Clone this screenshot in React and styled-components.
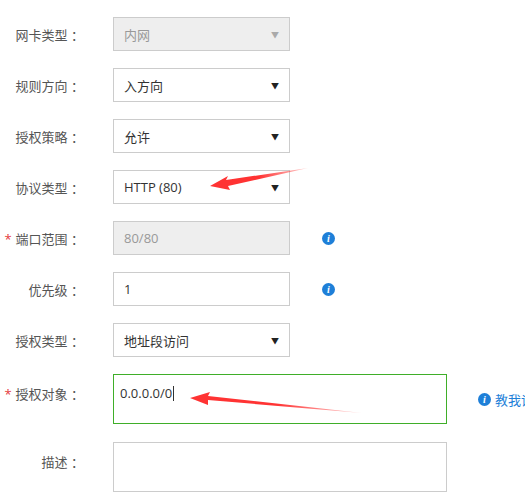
import React from 'react';
import styled, { createGlobalStyle } from 'styled-components';

const Global = createGlobalStyle`
  body { margin: 0; background: #fff; font-family: "Open Sans", "Noto Sans CJK SC", sans-serif; font-size: 13px; color: #333; }
`;

const Page = styled.div`
  position: relative;
  width: 525px;
  height: 500px;
  overflow: hidden;
  padding-top: 17px;
  box-sizing: border-box;
`;

const Row = styled.div`
  display: flex;
  align-items: center;
  height: ${p => (p.tall ? 50 : 34)}px;
  margin-bottom: ${p => (p.tall ? 18 : 17)}px;
`;

const Label = styled.div`
  flex-shrink: 0;
  width: 84px;
  margin-right: 29px;
  text-align: right;
  color: #555;
  white-space: nowrap;
  ${p => p.top && 'align-self: flex-start; padding-top: 10px;'}
`;

const Star = styled.span`
  color: #e4393c;
  margin-right: 4px;
`;

const Field = styled.div`
  flex-shrink: 0;
  box-sizing: border-box;
  width: ${p => p.w || 177}px;
  height: 100%;
  border: 1px solid ${p => (p.active ? '#3fae29' : '#ccc')};
  background: ${p => (p.disabled ? '#eee' : '#fff')};
  color: ${p => (p.disabled ? '#999' : '#333')};
  display: flex;
  align-items: ${p => (p.multi ? 'flex-start' : 'center')};
  padding: ${p => (p.multi ? '9px 6px' : '0 10px 0 10px')};
  justify-content: space-between;
`;

const Caret = styled.span`
  font-size: 8px;
  color: ${p => (p.disabled ? '#aaa' : '#222')};
`;

const Info = styled.span`
  flex-shrink: 0;
  display: inline-flex;
  align-items: center;
  justify-content: center;
  width: 13px;
  height: 13px;
  border-radius: 50%;
  background: #1e7fd8;
  color: #fff;
  font: italic bold 10px "Liberation Serif", serif;
  margin-left: ${p => p.gap ?? 32}px;
`;

const Help = styled.span`
  display: inline-flex;
  align-items: center;
  gap: 4px;
  margin-left: 31px;
  color: #1e7fd8;
  white-space: nowrap;
`;

const Cursor = styled.span`
  border-left: 1px solid #333;
  height: 15px;
  margin-left: 1px;
`;

const Value = styled.span`
  display: flex;
  align-items: center;
`;

const Arrows = styled.svg`
  position: absolute;
  left: 0;
  top: 0;
  pointer-events: none;
`;

const Select = ({ value, disabled }) => (
  <Field disabled={disabled}>
    <span>{value}</span>
    <Caret disabled={disabled}>▼</Caret>
  </Field>
);

export default function App() {
  return (
    <Page>
      <Global />
      <Row><Label>网卡类型 ：</Label><Select value="内网" disabled /></Row>
      <Row><Label>规则方向 ：</Label><Select value="入方向" /></Row>
      <Row><Label>授权策略 ：</Label><Select value="允许" /></Row>
      <Row><Label>协议类型 ：</Label><Select value="HTTP (80)" /></Row>
      <Row>
        <Label><Star>*</Star>端口范围 ：</Label>
        <Field disabled>80/80</Field>
        <Info>i</Info>
      </Row>
      <Row>
        <Label>优先级 ：</Label>
        <Field>1</Field>
        <Info>i</Info>
      </Row>
      <Row><Label>授权类型 ：</Label><Select value="地址段访问" /></Row>
      <Row tall>
        <Label top><Star>*</Star>授权对象 ：</Label>
        <Field w={334} active multi>
          <Value>0.0.0.0/0<Cursor /></Value>
        </Field>
        <Help><Info gap={0}>i</Info>教我设置</Help>
      </Row>
      <Row tall>
        <Label top>描述 ：</Label>
        <Field w={334} multi />
      </Row>
      <Arrows width="525" height="500">
        <defs>
          <linearGradient id="g1" x1="1" y1="0" x2="0" y2="0">
            <stop offset="0" stopColor="#f33" stopOpacity="0.2" />
            <stop offset="0.5" stopColor="#f33" />
          </linearGradient>
        </defs>
        <polygon points="308,168 226,180 228,176 210,186 230,190 228,186" fill="url(#g1)" />
        <polygon points="362,413 208,396 210,392 190,398 208,405 208,400" fill="url(#g1)" />
      </Arrows>
    </Page>
  );
}
